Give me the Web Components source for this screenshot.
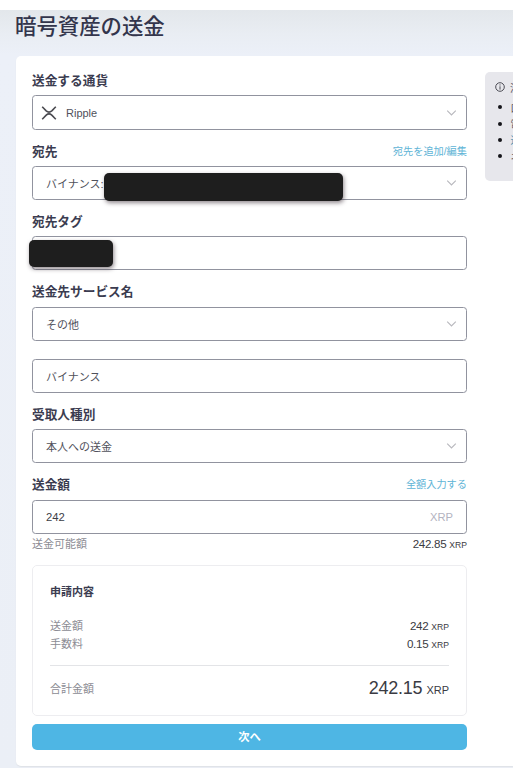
<!DOCTYPE html>
<html lang="ja">
<head>
<meta charset="utf-8">
<title>暗号資産の送金</title>
<style>
html,body{margin:0;height:768px;overflow:hidden;background:#ebeff6}
body{font-family:"Liberation Sans","Noto Sans CJK JP",sans-serif;color:#30303f}
</style>
</head>
<body>
<transfer-page>
  <form-field label="送金する通貨" arrow style="--h:35px"><xrp-icon></xrp-icon><span>Ripple</span></form-field>
  <form-field label="宛先" link="宛先を追加/編集" arrow>バイナンス:<redacted-bar slot="mask" style="left:71px;top:6px;width:239px;height:28px"></redacted-bar></form-field>
  <form-field label="宛先タグ"><redacted-bar slot="mask" style="left:-4px;top:3px;width:84px;height:27px"></redacted-bar></form-field>
  <form-field label="送金先サービス名" arrow style="--lg:6px">その他</form-field>
  <form-field style="--mt:18px">バイナンス</form-field>
  <form-field label="受取人種別" arrow style="--lg:5px">本人への送金</form-field>
  <form-field label="送金額" link="全額入力する" unit="XRP" style="--lg:6px">242</form-field>
  <amount-row style="--row:18px" label="送金可能額" value="242.85"></amount-row>
  <summary-box></summary-box>
  <submit-button>次へ</submit-button>
  <notice-panel slot="aside"></notice-panel>
</transfer-page>
<script>
function define(name, html, init) {
  customElements.define(name, class extends HTMLElement {
    constructor() {
      super();
      const t = document.createElement('template');
      t.innerHTML = html;
      this.attachShadow({mode: 'open'}).append(t.content.cloneNode(true));
    }
    connectedCallback() { if (init) init(this, this.shadowRoot); }
  });
}

define('transfer-page', `
<style>
:host{display:block;width:513px;height:768px;overflow:hidden;box-sizing:border-box;border-top:10px solid #fff;
 background:linear-gradient(#e3e7eb,#e9edf3 24px,#ecf0f8 45px,#ebeff6)}
h1{margin:0;height:46px;padding:0 0 0 15px;box-sizing:border-box;font:500 21.4px/30px "Noto Sans CJK JP",sans-serif;color:#33354c;white-space:nowrap}
main{display:flex;align-items:flex-start;gap:18px;box-sizing:border-box;margin-left:16px;height:710px;padding:14px 0 0 16px;background:#fff;border-radius:5px 0 0 5px;overflow:hidden;box-shadow:0 1px 1px #dfe2e7}
section{flex:none;width:435px}
</style>
<h1>暗号資産の送金</h1>
<main><section><slot></slot></section><slot name="aside"></slot></main>`);

define('form-field', `
<style>
:host{display:block;margin:var(--mt,0) 0 11px}
:host([unit]){margin-bottom:0}
.head{display:flex;justify-content:space-between;align-items:center;height:20px;margin-bottom:var(--lg,5px)}
.head[hidden]{display:none}
b{font:700 12.7px/20px "Noto Sans CJK JP",sans-serif;color:#3b3c50}
a{font-size:10.2px;line-height:20px;color:#60b4d6;padding-top:2px}
.box{position:relative;display:flex;align-items:center;box-sizing:border-box;height:var(--h,34px);border:1px solid #91939f;border-radius:3.5px;padding:0 13px;font-size:11px;color:#50515b;background:#fff}
:host([arrow]) .box{padding-right:9px}
:host([unit]) .val{font-size:11.3px;color:#3c3d46}
.val{flex:1;display:flex;align-items:center;gap:9px}
.unit{font-size:11.2px;color:#b3b3c0}
svg{display:block}
</style>
<div class="head"><b></b><a></a></div>
<div class="box"><div class="val"><slot></slot></div><span class="unit"></span>
<svg width="11" height="8" viewBox="0 0 11 8" fill="none" stroke="#b9b9be" stroke-width="1.2"><path d="M1.2 1.7 5.5 6 9.8 1.7"/></svg>
<slot name="mask"></slot></div>`, (el, r) => {
  const q = s => r.querySelector(s);
  q('b').textContent = el.getAttribute('label') || '';
  q('a').textContent = el.getAttribute('link') || '';
  q('.unit').textContent = el.getAttribute('unit') || '';
  if (!el.hasAttribute('label')) q('.head').hidden = true;
  if (!el.hasAttribute('arrow') && !el.hasAttribute('label') || !el.hasAttribute('arrow')) q('svg').remove();
});

define('xrp-icon', `
<style>:host{display:block;margin-left:-5px;width:16px;height:14px}svg{display:block}</style>
<svg width="16" height="14" viewBox="0 0 16 14" fill="none" stroke="#4a4a50" stroke-width="1.6"><path d="M1.2.8 5.2 4.8Q8 7.3 10.8 4.8L14.8.8M1.2 13.2 5.2 9.2Q8 6.7 10.8 9.2L14.8 13.2"/></svg>`);

define('redacted-bar', `
<style>:host{position:absolute;display:block;border-radius:5px;background:#1e1e1e;box-shadow:1px 2px 4px rgba(40,25,35,.5)}</style>`);

define('amount-row', `
<style>
:host{display:flex;justify-content:space-between;align-items:center;height:var(--row,18px)}
.l{font-size:11px;color:#8c8c94}
.v{font-size:var(--vs,11.6px);letter-spacing:var(--ls,-.3px);color:#3a3b43;white-space:nowrap;display:flex;align-items:baseline;gap:var(--ug,3px)}
small{font-size:var(--us,8.6px);letter-spacing:0}
</style>
<span class="l"></span><span class="v"><span></span><small>XRP</small></span>`, (el, r) => {
  r.querySelector('.l').textContent = el.getAttribute('label');
  r.querySelector('.v span').textContent = el.getAttribute('value');
});

define('summary-box', `
<style>
:host{display:block;box-sizing:border-box;margin-top:13px;height:151px;border:1px solid #ededf0;border-radius:5px;padding:14px 17px 0}
h2{margin:0 0 14px;font:700 11px/22px "Noto Sans CJK JP",sans-serif;color:#3b3c50}
hr{border:0;height:1px;background:#e3e4e7;margin:13px 0 8px}
</style>
<h2>申請内容</h2>
<amount-row label="送金額" value="242"></amount-row>
<amount-row label="手数料" value="0.15"></amount-row>
<hr>
<amount-row label="合計金額" value="242.15" style="--row:28px;--vs:18px;--us:11px;--ug:4px;--ls:-.25px"></amount-row>`);

define('submit-button', `
<style>:host{display:block;margin-top:8px}
button{display:block;width:100%;height:26px;border:0;border-radius:5px;padding:0 0 2px;background:#4eb6e4;color:#fff;font:700 11.3px/23px "Noto Sans CJK JP",sans-serif}</style>
<button><slot></slot></button>`);

define('notice-panel', `
<style>
:host{display:block;flex:none;box-sizing:border-box;width:60px;height:109px;margin-top:2px;padding:7px 0 0 10px;background:#e7e7ec;border-radius:5px;font-size:10px;color:#55555e}
.t{display:flex;align-items:center;gap:5px;height:16px;margin-bottom:4px}
ul{list-style:none;margin:0;padding:0}
li{display:flex;align-items:center;height:16.4px;gap:9px;padding-left:2.5px}
li::before{content:"";width:4px;height:4px;border-radius:50%;background:#15151b}
.k{color:#4d8fae}
</style>
<div class="t"><svg width="10" height="10" viewBox="0 0 10 10" fill="none" stroke="#4c4c55"><circle cx="5" cy="5" r="4.3"/><path d="M5 4.3V7.6M5 2.4V3.5"/></svg><span>注</span></div>
<ul><li>口</li><li>電</li><li class="k">送</li><li>ネ</li></ul>`);
</script>
</body>
</html>
